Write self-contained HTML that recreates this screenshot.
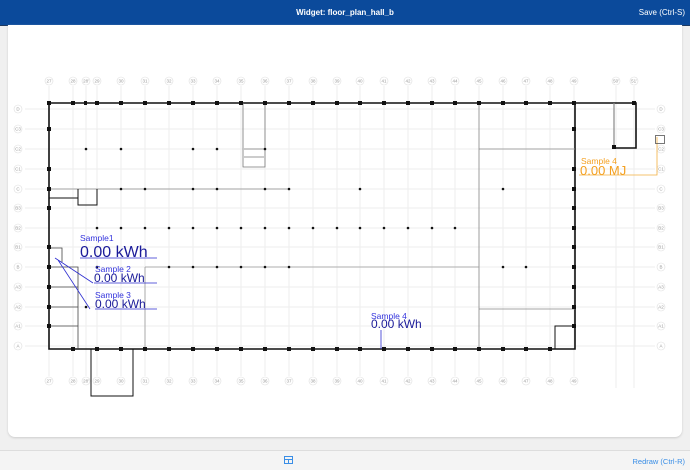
<!DOCTYPE html>
<html><head><meta charset="utf-8"><style>
body{margin:0;width:690px;height:469px;background:#f0f0f0;font-family:"Liberation Sans",sans-serif;overflow:hidden;position:relative}
.hdr{position:absolute;left:0;top:0;width:690px;height:25px;background:#0b4a9b;border-bottom:1px solid #1f3a60;color:#fff;font-size:8px}
.hdr .t{position:absolute;left:0;width:690px;top:8px;text-align:center;font-weight:bold}
.hdr .s{position:absolute;right:5px;top:8px}
.card{position:absolute;left:8px;top:25px;width:674px;height:412px;background:#fff;border-radius:0 0 7px 7px;box-shadow:0 1px 2px #ccc}
.ftr{position:absolute;left:0;top:450px;width:690px;height:19px;background:#f4f4f4;border-top:1px solid #ddd}
.ftr .r{position:absolute;right:5px;top:6px;font-size:7.5px;color:#3a8ee6}
svg{position:absolute;left:0;top:0}
.lb text{font-size:4.5px;fill:#999;text-anchor:middle}
</style></head><body>
<div class="hdr"><div class="t">Widget: floor_plan_hall_b</div><div class="s">Save (Ctrl-S)</div></div>
<div class="card"></div>
<div class="ftr"><div class="r">Redraw (Ctrl-R)</div>
<svg width="690" height="19" style="left:0;top:0"><rect x="284.5" y="5.5" width="8" height="7" fill="none" stroke="#3a8ee6"/><line x1="284.5" y1="8.5" x2="292.5" y2="8.5" stroke="#3a8ee6"/><line x1="288.5" y1="8.5" x2="288.5" y2="12.5" stroke="#3a8ee6"/></svg></div>
<svg width="690" height="469">
<g stroke="#eee" stroke-width="1">
<line x1="25" y1="109" x2="655" y2="109"/><line x1="25" y1="129" x2="655" y2="129"/><line x1="25" y1="149" x2="655" y2="149"/><line x1="25" y1="169" x2="655" y2="169"/><line x1="25" y1="189" x2="655" y2="189"/><line x1="25" y1="208" x2="655" y2="208"/><line x1="25" y1="228" x2="655" y2="228"/><line x1="25" y1="247" x2="655" y2="247"/><line x1="25" y1="267" x2="655" y2="267"/><line x1="25" y1="287" x2="655" y2="287"/><line x1="25" y1="307" x2="655" y2="307"/><line x1="25" y1="326" x2="655" y2="326"/><line x1="25" y1="346" x2="655" y2="346"/>
<line x1="49" y1="86" x2="49" y2="376"/><line x1="73" y1="86" x2="73" y2="376"/><line x1="86" y1="86" x2="86" y2="376"/><line x1="97" y1="86" x2="97" y2="376"/><line x1="121" y1="86" x2="121" y2="376"/><line x1="145" y1="86" x2="145" y2="376"/><line x1="169" y1="86" x2="169" y2="376"/><line x1="193" y1="86" x2="193" y2="376"/><line x1="217" y1="86" x2="217" y2="376"/><line x1="241" y1="86" x2="241" y2="376"/><line x1="265" y1="86" x2="265" y2="376"/><line x1="289" y1="86" x2="289" y2="376"/><line x1="313" y1="86" x2="313" y2="376"/><line x1="337" y1="86" x2="337" y2="376"/><line x1="360" y1="86" x2="360" y2="376"/><line x1="384" y1="86" x2="384" y2="376"/><line x1="408" y1="86" x2="408" y2="376"/><line x1="432" y1="86" x2="432" y2="376"/><line x1="455" y1="86" x2="455" y2="376"/><line x1="479" y1="86" x2="479" y2="376"/><line x1="503" y1="86" x2="503" y2="376"/><line x1="526" y1="86" x2="526" y2="376"/><line x1="550" y1="86" x2="550" y2="376"/><line x1="574" y1="86" x2="574" y2="376"/><line x1="616" y1="86" x2="616" y2="388"/><line x1="634" y1="86" x2="634" y2="388"/>
</g>
<g class="lb" fill="#fff" stroke="#ddd" stroke-width="0.6">
<circle cx="49" cy="81" r="4"/><circle cx="73" cy="81" r="4"/><circle cx="86" cy="81" r="4"/><circle cx="97" cy="81" r="4"/><circle cx="121" cy="81" r="4"/><circle cx="145" cy="81" r="4"/><circle cx="169" cy="81" r="4"/><circle cx="193" cy="81" r="4"/><circle cx="217" cy="81" r="4"/><circle cx="241" cy="81" r="4"/><circle cx="265" cy="81" r="4"/><circle cx="289" cy="81" r="4"/><circle cx="313" cy="81" r="4"/><circle cx="337" cy="81" r="4"/><circle cx="360" cy="81" r="4"/><circle cx="384" cy="81" r="4"/><circle cx="408" cy="81" r="4"/><circle cx="432" cy="81" r="4"/><circle cx="455" cy="81" r="4"/><circle cx="479" cy="81" r="4"/><circle cx="503" cy="81" r="4"/><circle cx="526" cy="81" r="4"/><circle cx="550" cy="81" r="4"/><circle cx="574" cy="81" r="4"/><circle cx="616" cy="81" r="4"/><circle cx="634" cy="81" r="4"/>
<circle cx="49" cy="381" r="4"/><circle cx="73" cy="381" r="4"/><circle cx="86" cy="381" r="4"/><circle cx="97" cy="381" r="4"/><circle cx="121" cy="381" r="4"/><circle cx="145" cy="381" r="4"/><circle cx="169" cy="381" r="4"/><circle cx="193" cy="381" r="4"/><circle cx="217" cy="381" r="4"/><circle cx="241" cy="381" r="4"/><circle cx="265" cy="381" r="4"/><circle cx="289" cy="381" r="4"/><circle cx="313" cy="381" r="4"/><circle cx="337" cy="381" r="4"/><circle cx="360" cy="381" r="4"/><circle cx="384" cy="381" r="4"/><circle cx="408" cy="381" r="4"/><circle cx="432" cy="381" r="4"/><circle cx="455" cy="381" r="4"/><circle cx="479" cy="381" r="4"/><circle cx="503" cy="381" r="4"/><circle cx="526" cy="381" r="4"/><circle cx="550" cy="381" r="4"/><circle cx="574" cy="381" r="4"/>
<circle cx="18" cy="109" r="4"/><circle cx="18" cy="129" r="4"/><circle cx="18" cy="149" r="4"/><circle cx="18" cy="169" r="4"/><circle cx="18" cy="189" r="4"/><circle cx="18" cy="208" r="4"/><circle cx="18" cy="228" r="4"/><circle cx="18" cy="247" r="4"/><circle cx="18" cy="267" r="4"/><circle cx="18" cy="287" r="4"/><circle cx="18" cy="307" r="4"/><circle cx="18" cy="326" r="4"/><circle cx="18" cy="346" r="4"/>
<circle cx="661" cy="109" r="4"/><circle cx="661" cy="129" r="4"/><circle cx="661" cy="149" r="4"/><circle cx="661" cy="169" r="4"/><circle cx="661" cy="189" r="4"/><circle cx="661" cy="208" r="4"/><circle cx="661" cy="228" r="4"/><circle cx="661" cy="247" r="4"/><circle cx="661" cy="267" r="4"/><circle cx="661" cy="287" r="4"/><circle cx="661" cy="307" r="4"/><circle cx="661" cy="326" r="4"/><circle cx="661" cy="346" r="4"/>
<g stroke="none">
<text x="49" y="82.5">27</text><text x="73" y="82.5">28</text><text x="86" y="82.5">28'</text><text x="97" y="82.5">29</text><text x="121" y="82.5">30</text><text x="145" y="82.5">31</text><text x="169" y="82.5">32</text><text x="193" y="82.5">33</text><text x="217" y="82.5">34</text><text x="241" y="82.5">35</text><text x="265" y="82.5">36</text><text x="289" y="82.5">37</text><text x="313" y="82.5">38</text><text x="337" y="82.5">39</text><text x="360" y="82.5">40</text><text x="384" y="82.5">41</text><text x="408" y="82.5">42</text><text x="432" y="82.5">43</text><text x="455" y="82.5">44</text><text x="479" y="82.5">45</text><text x="503" y="82.5">46</text><text x="526" y="82.5">47</text><text x="550" y="82.5">48</text><text x="574" y="82.5">49</text><text x="616" y="82.5">50'</text><text x="634" y="82.5">51'</text>
<text x="49" y="382.5">27</text><text x="73" y="382.5">28</text><text x="86" y="382.5">28'</text><text x="97" y="382.5">29</text><text x="121" y="382.5">30</text><text x="145" y="382.5">31</text><text x="169" y="382.5">32</text><text x="193" y="382.5">33</text><text x="217" y="382.5">34</text><text x="241" y="382.5">35</text><text x="265" y="382.5">36</text><text x="289" y="382.5">37</text><text x="313" y="382.5">38</text><text x="337" y="382.5">39</text><text x="360" y="382.5">40</text><text x="384" y="382.5">41</text><text x="408" y="382.5">42</text><text x="432" y="382.5">43</text><text x="455" y="382.5">44</text><text x="479" y="382.5">45</text><text x="503" y="382.5">46</text><text x="526" y="382.5">47</text><text x="550" y="382.5">48</text><text x="574" y="382.5">49</text>
<text x="18" y="110.5">D</text><text x="18" y="130.5">C3</text><text x="18" y="150.5">C2</text><text x="18" y="170.5">C1</text><text x="18" y="190.5">C</text><text x="18" y="209.5">B3</text><text x="18" y="229.5">B2</text><text x="18" y="248.5">B1</text><text x="18" y="268.5">B</text><text x="18" y="288.5">A3</text><text x="18" y="308.5">A2</text><text x="18" y="327.5">A1</text><text x="18" y="347.5">A</text>
<text x="661" y="110.5">D</text><text x="661" y="130.5">C3</text><text x="661" y="150.5">C2</text><text x="661" y="170.5">C1</text><text x="661" y="190.5">C</text><text x="661" y="209.5">B3</text><text x="661" y="229.5">B2</text><text x="661" y="248.5">B1</text><text x="661" y="268.5">B</text><text x="661" y="288.5">A3</text><text x="661" y="308.5">A2</text><text x="661" y="327.5">A1</text><text x="661" y="347.5">A</text>
</g></g>
<g fill="none" stroke="#111">
<path d="M49 103H636V148H614" stroke-width="1.6"/>
<path d="M614 103V147" stroke="#888" stroke-width="1.2"/>
<path d="M49 103V349H575V103" stroke-width="1.6"/>
<path d="M91 349V396H133V349" stroke-width="1"/>
<path d="M243 103V167H265V103" stroke="#777" stroke-width="0.8"/>
<path d="M244 149H264M244 157H264" stroke="#777" stroke-width="0.8"/>
<path d="M49 189H290" stroke="#888" stroke-width="0.8"/>
<path d="M78 189V205H97V189M49 198H78" stroke-width="1"/>
<path d="M479 149H575M479 103V349M479 309H575" stroke="#888" stroke-width="0.8"/>
<path d="M575 326H555V349" stroke-width="1"/>
<path d="M145 267H479M145 267V349" stroke="#999" stroke-width="0.8"/>
<path d="M49 267H78V349M49 287H78M49 307H78M49 326H78" stroke="#444" stroke-width="0.8"/>
<path d="M49 248H62V262" stroke="#444" stroke-width="0.8"/>
</g>
<g fill="#111">
<rect x="47" y="101" width="4" height="4"/><rect x="71" y="101" width="4" height="4"/><rect x="84" y="101" width="3" height="4"/><rect x="95" y="101" width="4" height="4"/><rect x="119" y="101" width="4" height="4"/><rect x="143" y="101" width="4" height="4"/><rect x="167" y="101" width="4" height="4"/><rect x="191" y="101" width="4" height="4"/><rect x="215" y="101" width="4" height="4"/><rect x="239" y="101" width="4" height="4"/><rect x="263" y="101" width="4" height="4"/><rect x="287" y="101" width="4" height="4"/><rect x="311" y="101" width="4" height="4"/><rect x="335" y="101" width="4" height="4"/><rect x="358" y="101" width="4" height="4"/><rect x="382" y="101" width="4" height="4"/><rect x="406" y="101" width="4" height="4"/><rect x="430" y="101" width="4" height="4"/><rect x="453" y="101" width="4" height="4"/><rect x="477" y="101" width="4" height="4"/><rect x="501" y="101" width="4" height="4"/><rect x="524" y="101" width="4" height="4"/><rect x="548" y="101" width="4" height="4"/><rect x="572" y="101" width="4" height="4"/><rect x="632" y="101" width="4" height="4"/>
<rect x="71" y="347" width="4" height="4"/><rect x="95" y="347" width="4" height="4"/><rect x="119" y="347" width="4" height="4"/><rect x="143" y="347" width="4" height="4"/><rect x="167" y="347" width="4" height="4"/><rect x="191" y="347" width="4" height="4"/><rect x="215" y="347" width="4" height="4"/><rect x="239" y="347" width="4" height="4"/><rect x="263" y="347" width="4" height="4"/><rect x="287" y="347" width="4" height="4"/><rect x="311" y="347" width="4" height="4"/><rect x="335" y="347" width="4" height="4"/><rect x="358" y="347" width="4" height="4"/><rect x="382" y="347" width="4" height="4"/><rect x="406" y="347" width="4" height="4"/><rect x="430" y="347" width="4" height="4"/><rect x="453" y="347" width="4" height="4"/><rect x="477" y="347" width="4" height="4"/><rect x="501" y="347" width="4" height="4"/><rect x="524" y="347" width="4" height="4"/><rect x="548" y="347" width="4" height="4"/>
<rect x="47" y="127" width="4" height="4"/><rect x="47" y="167" width="4" height="4"/><rect x="47" y="187" width="4" height="4"/><rect x="47" y="206" width="4" height="4"/><rect x="47" y="245" width="4" height="4"/><rect x="47" y="265" width="4" height="4"/><rect x="47" y="285" width="4" height="4"/><rect x="47" y="305" width="4" height="4"/><rect x="47" y="324" width="4" height="4"/>
<rect x="572" y="127" width="4" height="4"/><rect x="572" y="167" width="4" height="4"/><rect x="572" y="187" width="4" height="4"/><rect x="572" y="206" width="4" height="4"/><rect x="572" y="226" width="4" height="4"/><rect x="572" y="245" width="4" height="4"/><rect x="572" y="265" width="4" height="4"/><rect x="572" y="285" width="4" height="4"/><rect x="572" y="305" width="4" height="4"/><rect x="572" y="324" width="4" height="4"/><rect x="612" y="145" width="4" height="4"/>
<circle cx="86" cy="149" r="1.3"/><circle cx="121" cy="149" r="1.3"/><circle cx="193" cy="149" r="1.3"/><circle cx="217" cy="149" r="1.3"/><circle cx="265" cy="149" r="1.3"/>
<circle cx="121" cy="189" r="1.3"/><circle cx="145" cy="189" r="1.3"/><circle cx="193" cy="189" r="1.3"/><circle cx="217" cy="189" r="1.3"/><circle cx="265" cy="189" r="1.3"/><circle cx="289" cy="189" r="1.3"/><circle cx="360" cy="189" r="1.3"/>
<circle cx="97" cy="228" r="1.3"/><circle cx="121" cy="228" r="1.3"/><circle cx="145" cy="228" r="1.3"/><circle cx="169" cy="228" r="1.3"/><circle cx="193" cy="228" r="1.3"/><circle cx="217" cy="228" r="1.3"/><circle cx="241" cy="228" r="1.3"/><circle cx="265" cy="228" r="1.3"/><circle cx="289" cy="228" r="1.3"/><circle cx="313" cy="228" r="1.3"/><circle cx="337" cy="228" r="1.3"/><circle cx="360" cy="228" r="1.3"/><circle cx="384" cy="228" r="1.3"/><circle cx="408" cy="228" r="1.3"/><circle cx="432" cy="228" r="1.3"/><circle cx="455" cy="228" r="1.3"/>
<circle cx="169" cy="267" r="1.3"/><circle cx="193" cy="267" r="1.3"/><circle cx="217" cy="267" r="1.3"/><circle cx="241" cy="267" r="1.3"/><circle cx="265" cy="267" r="1.3"/><circle cx="289" cy="267" r="1.3"/><circle cx="503" cy="267" r="1.3"/><circle cx="526" cy="267" r="1.3"/><circle cx="97" cy="267" r="1.3"/><circle cx="86" cy="307" r="1.3"/><circle cx="503" cy="189" r="1.3"/>
</g>
<g font-family="'Liberation Sans',sans-serif">
<g stroke="#2f2fd0" stroke-width="0.8" fill="none">
<path d="M80 258H157M94 283H157M95 309H157M55 258L93 283M58 260L90 309M381 330V349"/></g>
<text x="80" y="241" font-size="8.5" fill="#3333dd">Sample1</text>
<text x="80" y="257" font-size="16" fill="#1a1a99">0.00 kWh</text>
<text x="95" y="272" font-size="8.5" fill="#3333dd">Sample 2</text>
<text x="94" y="282" font-size="12" fill="#1a1a99">0.00 kWh</text>
<text x="95" y="298" font-size="8.5" fill="#3333dd">Sample 3</text>
<text x="95" y="308" font-size="12" fill="#1a1a99">0.00 kWh</text>
<text x="371" y="319" font-size="8.5" fill="#3333dd">Sample 4</text>
<text x="371" y="328" font-size="12" fill="#1a1a99">0.00 kWh</text>
<path d="M579 175H657V137" stroke="#f4b040" stroke-width="0.8" fill="none"/>
<rect x="655.5" y="135.5" width="9" height="8" fill="none" stroke="#555" stroke-width="0.8"/>
<text x="581" y="164" font-size="8.5" fill="#f4a020">Sample 4</text>
<text x="580" y="175" font-size="13" fill="#f4a020">0.00 MJ</text>
</g>
</svg>
</body></html>
